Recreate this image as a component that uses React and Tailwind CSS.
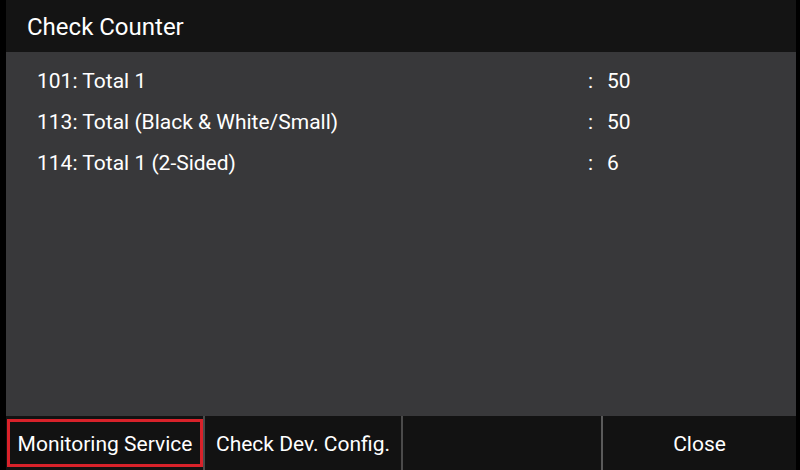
import React from "react";

const rows = [
  { label: "101: Total 1", value: "50" },
  { label: "113: Total (Black & White/Small)", value: "50" },
  { label: "114: Total 1 (2-Sided)", value: "6" },
];

export default function App() {
  return (
    <div
      className="w-[800px] h-[470px] bg-black flex pl-[6px] pr-[4px] overflow-hidden"
      style={{ fontFamily: "Roboto, 'Liberation Sans', sans-serif" }}
    >
      <div className="flex-1 flex flex-col">
        <div className="h-[52px] bg-[#141414] flex items-center pl-[21px] pt-[2px] text-white text-[24px]">
          Check Counter
        </div>
        <div className="flex-1 bg-[#38383a] pt-[10px] pl-[31px] text-white text-[21px]">
          {rows.map((r) => (
            <div key={r.label} className="flex h-[42px] items-center -mt-[1px]">
              <div className="w-[551px]">{r.label}</div>
              <div className="w-[19px]">:</div>
              <div>{r.value}</div>
            </div>
          ))}
        </div>
        <div className="h-[54px] bg-[#121212] flex text-white text-[21px]">
          <div className="w-[197px] flex items-center py-[3px] pl-[1px]">
            <div className="h-full w-full border-[3px] border-[#d8222a] flex items-center justify-center pt-[3px]">
              Monitoring Service
            </div>
          </div>
          <div className="w-[198px] border-l-2 border-[#4a4a4a] flex items-center justify-center pt-[3px]">
            Check Dev. Config.
          </div>
          <div className="w-[200px] border-l-2 border-[#4a4a4a]"></div>
          <div className="flex-1 border-l-2 border-[#5a5a5a] flex items-center justify-center pt-[3px]">
            Close
          </div>
        </div>
      </div>
    </div>
  );
}
